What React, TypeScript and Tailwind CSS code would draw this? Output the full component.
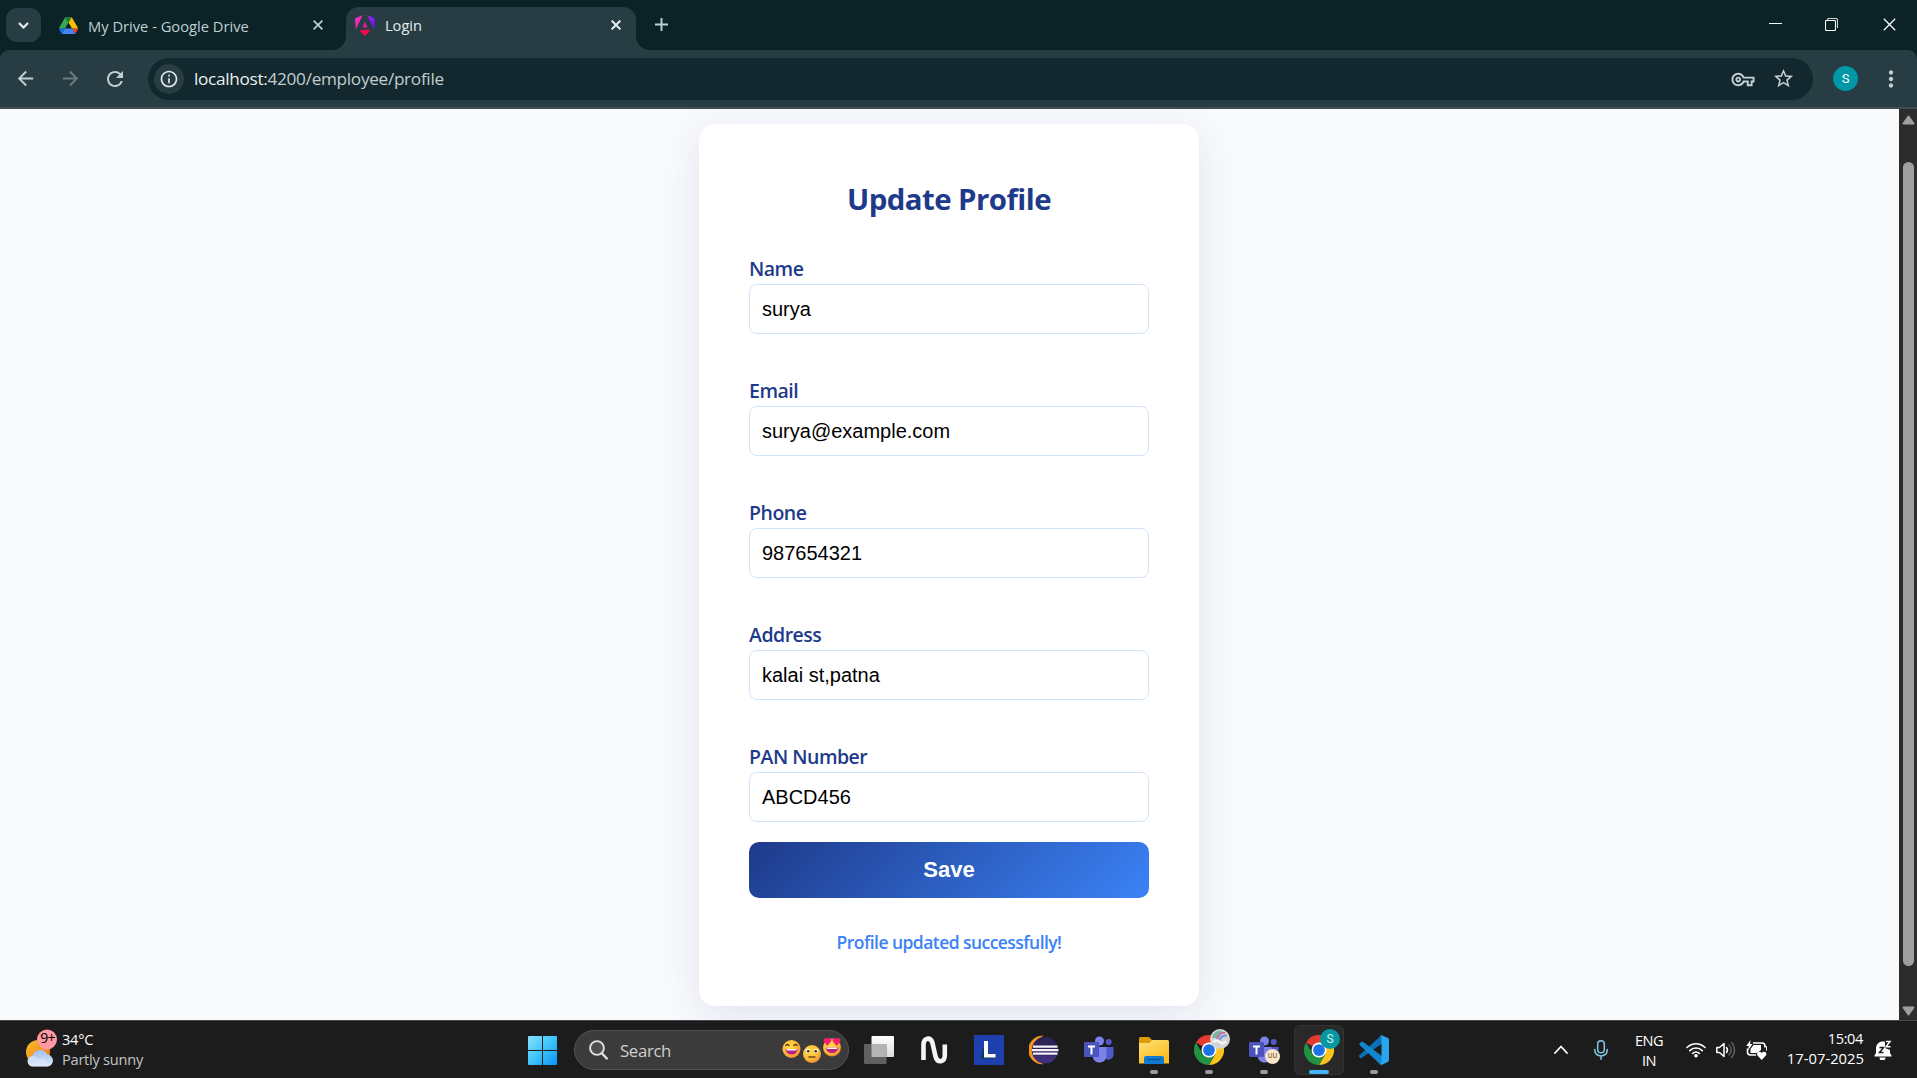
import React from "react";
import {
  MdArrowBack,
  MdArrowForward,
  MdMoreVert,
  MdOutlineInfo,
  MdOutlineVpnKey,
  MdRefresh,
  MdStarBorder,
} from "react-icons/md";

function DriveIcon() {
  return (
    <svg className="h-[17px] w-[19px]" viewBox="0 0 87.3 78">
      <path d="m6.6 66.85 3.85 6.65c.8 1.4 1.95 2.5 3.3 3.3l13.75-23.8h-27.5c0 1.55.4 3.1 1.2 4.5z" fill="#1d6ee8" />
      <path d="m43.65 25-13.75-23.8c-1.35.8-2.5 1.9-3.3 3.3l-25.4 44a9.06 9.06 0 0 0 -1.2 4.5h27.5z" fill="#34a853" />
      <path d="m73.55 76.8c1.35-.8 2.5-1.9 3.3-3.3l1.6-2.75 7.65-13.25c.8-1.4 1.2-2.95 1.2-4.5h-27.5l5.85 11.5z" fill="#ea4335" />
      <path d="m43.65 25 13.75-23.8c-1.35-.8-2.9-1.2-4.5-1.2h-18.5c-1.6 0-3.15.45-4.5 1.2z" fill="#188038" />
      <path d="m59.8 53h-32.3l-13.75 23.8c1.35.8 2.9 1.2 4.5 1.2h50.8c1.6 0 3.15-.45 4.5-1.2z" fill="#4285f4" />
      <path d="m73.4 26.5-12.7-22c-.8-1.4-1.95-2.5-3.3-3.3l-13.75 23.8 16.15 28h27.45c0-1.55-.4-3.1-1.2-4.5z" fill="#fbbc04" />
    </svg>
  );
}

function AngularIcon() {
  return (
    <svg className="h-[21px] w-[20px]" viewBox="0 0 223 236">
      <defs>
        <linearGradient id="ngA" x1="0" y1="0" x2="0.9" y2="1">
          <stop offset="0" stopColor="#f637e3" />
          <stop offset="1" stopColor="#f0108a" />
        </linearGradient>
        <linearGradient id="ngB" x1="0" y1="0" x2="1" y2="0.6">
          <stop offset="0" stopColor="#b026f0" />
          <stop offset="1" stopColor="#6d10f5" />
        </linearGradient>
      </defs>
      <path d="m222.077 39.192-8.019 125.923L137.387 0l84.69 39.192Z" fill="url(#ngB)" />
      <path d="m165.4 186.6-53.9 48.4-53.9-48.4 10.9-20.6h86.1l10.8 20.6Z" fill="#f5064f" />
      <path d="M83.2 141 111.2 73l28.1 68H83.2Z" fill="#e5179f" />
      <path d="M8.081 165.115 0 39.192 84.69 0 8.081 165.115Z" fill="url(#ngA)" />
    </svg>
  );
}

function CrossIcon({ className }: { className: string }) {
  return (
    <svg className={className} viewBox="0 0 10 10" fill="none" stroke="currentColor">
      <path d="M0.6 0.6 9.4 9.4M9.4 0.6 0.6 9.4" />
    </svg>
  );
}

function TabStrip() {
  return (
    <div className="flex h-[50px] shrink-0 bg-[#0b2227]">
      <button className="mt-2 ml-1.5 flex h-[34px] w-[35px] items-center justify-center rounded-[11px] bg-[#283d43]">
        <svg className="h-[7px] w-[11px]" viewBox="0 0 11 7" fill="none" stroke="#e6edee" strokeWidth="2.2">
          <path d="M1 1 5.5 5.5 10 1" />
        </svg>
      </button>
      <div className="ml-[18px] flex w-[287px] items-center text-[#bfcfd2]">
        <DriveIcon />
        <span className="ml-[10px] flex-1 pt-0.5 text-[14.7px]">My Drive - Google Drive</span>
        <CrossIcon className="mr-[23px] h-[10px] w-[10px] stroke-[1.7]" />
      </div>
      <div className="relative mt-[7px] flex h-[43px] w-[290px] items-center rounded-t-[13px] bg-[#283d43] pb-[7px] text-[#e4ebec]">
        <svg className="absolute bottom-0 -left-[14px] h-[14px] w-[14px]" viewBox="0 0 14 14">
          <path d="M14 0v14H0A14 14 0 0 0 14 0Z" fill="#283d43" />
        </svg>
        <svg className="absolute -right-[14px] bottom-0 h-[14px] w-[14px]" viewBox="0 0 14 14">
          <path d="M0 0v14h14A14 14 0 0 1 0 0Z" fill="#283d43" />
        </svg>
        <div className="ml-[9px]">
          <AngularIcon />
        </div>
        <span className="ml-[10px] flex-1 pt-0.5 text-[14.6px]">Login</span>
        <CrossIcon className="mr-[15px] h-[10px] w-[10px] stroke-2" />
      </div>
      <svg className="mt-[18px] ml-[19px] h-[13px] w-[13px]" viewBox="0 0 13 13" stroke="#bfcfd2" strokeWidth="1.9">
        <path d="M6.5 0v13M0 6.5h13" />
      </svg>
      <div className="mt-[18px] ml-auto flex h-[13px] items-center text-white">
        <svg className="h-[13px] w-[13px]" viewBox="0 0 13 13">
          <path d="M0 5h13v1H0z" fill="currentColor" />
        </svg>
        <svg className="ml-[43px] h-[13px] w-[13px]" viewBox="0 0 13 13" fill="none" stroke="currentColor" strokeWidth="1.1">
          <rect x="0.5" y="2.5" width="10" height="10" rx="1" />
          <path d="M2.5 2.5V1.5a1 1 0 0 1 1-1H10.5a2 2 0 0 1 2 2V10" strokeOpacity="0.8" />
        </svg>
        <CrossIcon className="mr-[21px] ml-[45px] h-[13px] w-[13px] stroke-[0.9]" />
      </div>
    </div>
  );
}

function Toolbar() {
  return (
    <div className="shrink-0 bg-[#0b2227]">
      <div className="flex h-[59px] items-center rounded-t-[9px] border-b-2 border-[#444c50] bg-[#283d43] text-[#bfcfd2]">
        <MdArrowBack className="ml-[14px] h-[23px] w-[23px]" />
        <MdArrowForward className="ml-[22px] h-[23px] w-[23px] text-[#6a7b80]" />
        <MdRefresh className="ml-[21px] h-[24px] w-[24px]" />
        <div className="ml-[21px] flex h-[42px] flex-1 items-center rounded-full bg-[#12282e]">
          <div className="ml-1.5 flex h-[30px] w-[30px] items-center justify-center rounded-full bg-[#283d43]">
            <MdOutlineInfo className="h-[20px] w-[20px] text-[#e4ebec]" />
          </div>
          <span className="ml-[10px] flex-1 pt-px text-[17.2px] tracking-[-0.3px] text-[#c3cccf]">
            <span className="text-[#e9eff0]">localhost:</span>4200/employee/profile
          </span>
          <MdOutlineVpnKey className="h-[24px] w-[24px] pt-px text-[#c6cfd1]" />
          <MdStarBorder className="mr-[18px] ml-[17px] h-[23px] w-[23px] text-[#c6cfd1]" />
        </div>
        <div className="ml-5 flex h-[25px] w-[25px] items-center justify-center rounded-full bg-[#0097a7] font-['Roboto'] text-[13px] text-white">
          S
        </div>
        <MdMoreVert className="mr-[13px] ml-[20px] h-[26px] w-[26px]" />
      </div>
    </div>
  );
}

const fields: [string, string][] = [
  ["Name", "surya"],
  ["Email", "surya@example.com"],
  ["Phone", "987654321"],
  ["Address", "kalai st,patna"],
  ["PAN Number", "ABCD456"],
];

function ProfileCard() {
  return (
    <div className="mt-[15px] h-[882px] w-[500px] rounded-2xl bg-white p-[50px] shadow-[0_10px_40px_rgba(30,58,138,0.11)]">
      <h2 className="text-center text-[29.4px] leading-[50px] font-bold tracking-[-0.55px] text-[#1e3a8a]">
        Update Profile
      </h2>
      <form className="mt-7 flex flex-col">
        <div className="flex flex-col gap-10">
          {fields.map(([label, value]) => (
            <label key={label} className="flex flex-col">
              <span className="h-8 pt-px text-[19.5px] leading-8 font-semibold tracking-[-0.5px] text-[#1e3a8a]">{label}</span>
              <input
                className="h-[50px] rounded-lg border border-[#d0e2f8] bg-white px-3 font-['Liberation_Sans'] text-[20px] text-black outline-none"
                defaultValue={value}
              />
            </label>
          ))}
        </div>
        <button
          type="button"
          className="mt-5 h-14 rounded-[10px] bg-[linear-gradient(135deg,#1e3a8a,#3b82f6)] pb-0.5 font-['Liberation_Sans'] text-[22px] font-bold text-white"
        >
          Save
        </button>
      </form>
      <p className="mt-[30px] text-center text-[17.5px] leading-7 font-semibold tracking-[-0.55px] text-[#3b82f6]">
        Profile updated successfully!
      </p>
    </div>
  );
}

function Scrollbar() {
  return (
    <div className="flex w-[18px] shrink-0 flex-col items-center bg-[#2c2c2c] pl-px">
      <svg className="mt-[6px] h-[10px] w-[13px]" viewBox="0 0 13 10">
        <path d="M6.5 1.5 11.5 8.5H1.5Z" fill="#9f9f9f" stroke="#9f9f9f" strokeWidth="2" strokeLinejoin="round" />
      </svg>
      <div className="mt-[37px] h-[804px] w-[11px] rounded-full bg-[#9f9f9f]" />
      <svg className="mt-[40px] h-[10px] w-[13px]" viewBox="0 0 13 10">
        <path d="M6.5 8.5 11.5 1.5H1.5Z" fill="#9f9f9f" stroke="#9f9f9f" strokeWidth="2" strokeLinejoin="round" />
      </svg>
    </div>
  );
}

function WeatherIcon() {
  return (
    <svg className="h-[38px] w-[32px] overflow-visible" viewBox="0 0 32 38">
      <defs>
        <linearGradient id="sun" x1="0" y1="0" x2="1" y2="1">
          <stop offset="0" stopColor="#f6c02c" />
          <stop offset="1" stopColor="#f2710f" />
        </linearGradient>
        <linearGradient id="cloud" x1="0" y1="0" x2="0.2" y2="1">
          <stop offset="0" stopColor="#9cbcf2" />
          <stop offset="1" stopColor="#d5e4fb" />
        </linearGradient>
      </defs>
      <circle cx="12" cy="21" r="12" fill="url(#sun)" />
      <path d="M7 35.500a5.200 5.200 0 0 1-.6-10.400 8 8 0 0 1 15-1.500 6 6 0 0 1 .6 11.900Z" fill="url(#cloud)" />
      <path d="M7 35.500a5.200 5.200 0 0 1 0-10.400c3 0 5 2 5.600 4 2-2 5-2 7 0 2 2 3 4 2.400 6.400Z" fill="#e4eefd" fillOpacity="0.45" />
      <circle cx="21" cy="8.500" r="10" fill="#ff99a4" />
    </svg>
  );
}

function WindowsIcon() {
  return (
    <svg className="mt-px h-[29px] w-[29px]" viewBox="0 0 29 29">
      <defs>
        <linearGradient id="win" x1="0" y1="0" x2="29" y2="29" gradientUnits="userSpaceOnUse">
          <stop offset="0" stopColor="#86e2ff" />
          <stop offset="0.5" stopColor="#3fc3fb" />
          <stop offset="1" stopColor="#0a93f5" />
        </linearGradient>
      </defs>
      <path d="M0 1a1 1 0 0 1 1-1h13v14H0ZM15 0h13a1 1 0 0 1 1 1v13H15ZM0 15h14v14H1a1 1 0 0 1-1-1ZM15 15h14v13a1 1 0 0 1-1 1H15Z" fill="url(#win)" />
    </svg>
  );
}

function SearchEmoji() {
  return (
    <svg className="h-[26px] w-[60px]" viewBox="0 0 60 26">
      <defs>
        <radialGradient id="face" cx="0.4" cy="0.35" r="0.7">
          <stop offset="0" stopColor="#ffdc4a" />
          <stop offset="0.6" stopColor="#fdbb36" />
          <stop offset="1" stopColor="#f08a35" />
        </radialGradient>
      </defs>
      <circle cx="9.500" cy="12" r="9" fill="url(#face)" />
      <path d="M3.500 12h12a6 5.500 0 0 1-12 0Z" fill="#bb1d80" />
      <path d="M4.500 12h10v1.500h-10Z" fill="#fff" />
      <path d="M3.500 9q2-3 4 0M11.500 9q2-3 4 0" fill="none" stroke="#5a2d1a" strokeWidth="1.300" />
      <circle cx="30" cy="17" r="9" fill="url(#face)" />
      <circle cx="26" cy="14" r="2.200" fill="#fff" />
      <circle cx="34" cy="14" r="2.200" fill="#fff" />
      <circle cx="26.200" cy="14.200" r="1.300" fill="#3a2318" />
      <circle cx="33.800" cy="14.200" r="1.300" fill="#3a2318" />
      <path d="M26.500 20h7" stroke="#5a2d1a" strokeWidth="1.300" />
      <circle cx="50" cy="10.500" r="9" fill="url(#face)" />
      <path d="M44 10.500h12a6 5.500 0 0 1-12 0Z" fill="#bb1d80" />
      <path d="M45 10.500h10v1.500H45Z" fill="#fff" />
      <path d="M45.500 9 41.800 4.500C40.500 2 43.500 -0.200 45.300 2 47 -0.400 50 1 49.300 4Z" fill="#f4216f" />
      <path d="M54.500 9 50.700 4C50 1 53 -0.400 54.700 2 56.500 -0.200 59.500 2 58.200 4.500Z" fill="#f4216f" />
    </svg>
  );
}

function TaskViewIcon() {
  return (
    <svg className="h-[28px] w-[30px]" viewBox="0 0 30 28">
      <defs>
        <linearGradient id="tv" x1="0" y1="0" x2="0" y2="1">
          <stop offset="0" stopColor="#fff" />
          <stop offset="1" stopColor="#dcdcdc" />
        </linearGradient>
      </defs>
      <rect x="7.500" width="22.500" height="21" rx="1" fill="url(#tv)" />
      <rect y="8" width="22.500" height="20" rx="1" fill="#606060" />
      <path d="M7.500 8h15v13h-15Z" fill="#b4b4b4" />
    </svg>
  );
}

function WaveIcon() {
  return (
    <svg className="h-[28px] w-[28px]" viewBox="0 0 28 28" fill="none" stroke="#f5f5f5" strokeWidth="4.600">
      <path d="M3.500 24V9C3.500 1.500 10.500.500 12.500 7L15.500 20.500C17.500 27.500 24.800 26.500 24.800 19V8.500" />
    </svg>
  );
}

function EclipseIcon() {
  return (
    <svg className="h-[30px] w-[30px]" viewBox="0 0 30 30">
      <path d="M13.500 1A14 14 0 0 0 13.500 29 16 16 0 0 1 13.500 1Z" fill="#f7941e" stroke="#f7941e" strokeWidth="0.800" />
      <circle cx="16" cy="15" r="13.200" fill="#2c2255" />
      <path d="M4 20.500a13 13 0 0 0 24 0Z" fill="#3f3079" />
      <path d="M4 10.500h24.500v2.200H4ZM3 14h26.500v2.200H3ZM4 17.500h24.500v2.200H4Z" fill="#f3f0fa" />
    </svg>
  );
}

function TeamsIcon() {
  return (
    <svg className="h-[28px] w-[30px]" viewBox="0 0 30 28">
      <circle cx="24.700" cy="6" r="3" fill="#5059c9" />
      <path d="M20 11h9.500v8a5.500 5.500 0 0 1-9.500 3Z" fill="#5059c9" />
      <circle cx="15.500" cy="5" r="4.500" fill="#7b83eb" />
      <path d="M9 11h13.500v9a7 7 0 0 1-13.500 2Z" fill="#7b83eb" />
      <rect y="6" width="15" height="15" rx="1.300" fill="#4b53bc" />
      <path d="M4 9.500h7v1.900H8.500v7h-2v-7H4Z" fill="#fff" />
    </svg>
  );
}

function FolderIcon() {
  return (
    <svg className="mt-px h-[27px] w-[30px]" viewBox="0 0 30 27">
      <defs>
        <linearGradient id="folder" x1="0" y1="0" x2="0.6" y2="1">
          <stop offset="0" stopColor="#ffe07a" />
          <stop offset="1" stopColor="#fbbc1b" />
        </linearGradient>
      </defs>
      <path d="M0 1.500A1.500 1.500 0 0 1 1.500 0H10l3 3v5H0Z" fill="#dd9b06" />
      <path d="M0 6h10.500l2.500-3h15.500A1.500 1.500 0 0 1 30 4.500V26.500H0Z" fill="url(#folder)" />
      <path d="M5 27v-6a2 2 0 0 1 2-2h16a2 2 0 0 1 2 2v6Z" fill="#0f7bd1" />
      <path d="M8.500 22.500h13" stroke="#0a4f94" strokeWidth="1.300" />
    </svg>
  );
}

function ChromeIcon() {
  return (
    <svg className="h-[30px] w-[30px]" viewBox="0 0 48 48">
      <path d="M24 24 3.200 12A24 24 0 0 1 44.800 12Z" fill="#e33b2e" />
      <path d="M24 12H44.800A24 24 0 0 1 24 48L34.400 30Z" fill="#fcc31e" />
      <path d="M13.600 30 3.200 12A24 24 0 0 0 24 48L34.400 30Z" fill="#229342" />
      <circle cx="24" cy="24" r="12" fill="#fff" />
      <circle cx="24" cy="24" r="9.400" fill="#1a73e8" />
    </svg>
  );
}

function CodeIcon() {
  return (
    <svg className="h-[30px] w-[30px]" viewBox="0 0 100 100">
      <path d="M3 66 72 3 97 14 10 76a5 5 0 0 1-7 0L1 73a5 5 0 0 1 2-7Z" fill="#0a70b8" />
      <path d="M3 34a5 5 0 0 1 0-7L8 23a5 5 0 0 1 6 0L97 86 72 99Z" fill="#1286d0" />
      <path d="M73 99a6 6 0 0 1-3-3L75 93V7L70 3.500A6 6 0 0 1 76 .500L96 10a6 6 0 0 1 4 5.500V84.500a6 6 0 0 1-4 5.500L77 99a6 6 0 0 1-4 0Z" fill="#2ba5ee" />
    </svg>
  );
}

function TaskCell({ state, children }: { state?: "open" | "active"; children: React.ReactNode }) {
  const tone = state === "active" ? "border-[#343434] bg-[#292929]" : "border-transparent";
  return (
    <div className={`relative flex h-[50px] w-[50px] items-center justify-center rounded-md border ${tone}`}>
      {children}
      {state === "open" && <span className="absolute bottom-0 left-[20px] h-1 w-2 rounded-full bg-[#9a9a9a]" />}
      {state === "active" && <span className="absolute bottom-0 left-[14px] h-1 w-5 rounded-full bg-[#42b5fa]" />}
    </div>
  );
}

function Tray() {
  return (
    <div className="ml-auto flex h-full items-center text-[14.6px] leading-5 text-white">
      <svg className="h-[9px] w-[14px]" viewBox="0 0 14 9" fill="none" stroke="currentColor" strokeWidth="1.800" strokeLinecap="round" strokeLinejoin="round">
        <path d="M1 8 7 1.500 13 8" />
      </svg>
      <svg className="ml-[26px] h-[20px] w-[14px]" viewBox="0 0 14 20" fill="none" stroke="#7fcbe4" strokeWidth="1.500" strokeLinecap="round">
        <rect x="3.700" y="0.800" width="6.600" height="12" rx="3.300" />
        <path d="M.800 9.500v1a6.200 5.500 0 0 0 12.400 0v-1M7 16v3.200" />
      </svg>
      <div className="ml-[25px] w-8 text-center tracking-[-0.6px]">
        <div>ENG</div>
        <div>IN</div>
      </div>
      <svg className="ml-[21px] h-[16px] w-[20px]" viewBox="0 0 20 16" fill="none" stroke="currentColor" strokeWidth="1.600" strokeLinecap="round">
        <path d="M1 5.500a12.700 12.700 0 0 1 18 0M3.800 8.600a8.800 8.800 0 0 1 12.400 0M6.600 11.500a4.900 4.900 0 0 1 6.800 0" />
        <circle cx="10" cy="13.800" r="1.200" fill="currentColor" stroke="none" />
        <circle cx="10" cy="13.800" r="1" />
      </svg>
      <svg className="ml-[10px] h-[18px] w-[20px]" viewBox="0 0 20 18" fill="none" stroke="currentColor" strokeWidth="1.500" strokeLinecap="round" strokeLinejoin="round">
        <path d="M.800 6.500h2.700L8 2.500v13L3.500 11.500H.800ZM10.500 6.500a4 4 0 0 1 0 5" />
        <path d="M13 4a7 7 0 0 1 0 10M15.500 1.500a11 11 0 0 1 0 15" stroke="#5c5c5c" />
      </svg>
      <svg className="ml-[10px] h-[20px] w-[21px]" viewBox="0 0 21 20">
        <path d="M7 3h9a3 3 0 0 1 3 3v1.500M1.500 8.500V12a3 3 0 0 0 3 3H10" fill="none" stroke="#fff" strokeWidth="1.600" />
        <path d="M7.500 5h7.500v5l-4 3H4.500V9Z" fill="#fff" />
        <path d="M4.500 0 .200 6h2.500L2 10.500 6.500 4H4Z" fill="#fff" />
        <path d="M19 6.500h1.500v4" stroke="#fff" fill="none" />
        <path d="M15.700 20 11.500 15.500c-1.800-3 2-5 4.200-2.500 2.200-2.500 6-.500 4.200 2.500Z" fill="#fff" />
      </svg>
      <div className="ml-[16px] w-[80px] pb-[3px] text-right">
        <div className="tracking-[-0.4px]">15:04</div>
        <div className="-mr-px text-[14.8px]">17-07-2025</div>
      </div>
      <svg className="mr-[25px] ml-[11px] h-[20px] w-[18px]" viewBox="0 0 18 20">
        <path d="M2 13V7.500A6.500 6.500 0 0 1 8 1.500H11V8l5 2v3l1.500 2.500V16.500H.500V15.500Z" fill="#fff" />
        <path d="M5.500 17.500h6a3 3 0 0 1-6 0Z" fill="#fff" />
        <path d="M5.500 7.500h4l-4 5h4" fill="none" stroke="#1c1c1c" strokeWidth="1.500" />
        <path d="M12 1.500h4L12 6.800h4.500" fill="none" stroke="#fff" strokeWidth="1.500" />
      </svg>
    </div>
  );
}

function Taskbar() {
  return (
    <div className="flex h-[58px] shrink-0 items-center border-t border-[#45494b] bg-[#1c1c1c]">
      <div className="relative ml-[26px] flex w-[502px] items-center text-white">
        <WeatherIcon />
        <span className="absolute -top-px left-[12px] w-[19px] text-center text-[14px] leading-[19px] tracking-[-0.7px] text-black">
          9+
        </span>
        <div className="ml-[4px] pb-0.5 text-[14.6px] leading-5">
          <div className="tracking-[-0.25px]">34°C</div>
          <div className="tracking-[-0.25px] text-[#c4c4c4]">Partly sunny</div>
        </div>
      </div>
      <WindowsIcon />
      <div className="ml-[17px] flex h-10 w-[275px] items-center rounded-full border border-[#525252] bg-[#3b3b3b]">
        <svg className="ml-[14px] h-[20px] w-[19px]" viewBox="0 0 19 20" fill="none" stroke="#e2e2e2">
          <circle cx="8" cy="8" r="6.900" strokeWidth="1.900" fill="#4d4f50" />
          <path d="m12.800 13.200 5 5.300" strokeWidth="2.400" strokeLinecap="round" />
        </svg>
        <span className="ml-[12px] flex-1 pt-0.5 text-[16.8px] tracking-[-0.35px] text-[#cfcfcf]">Search</span>
        <div className="mr-[6px]">
          <SearchEmoji />
        </div>
      </div>
      <div className="ml-[5px] flex gap-[5px]">
        <TaskCell>
          <TaskViewIcon />
        </TaskCell>
        <TaskCell>
          <WaveIcon />
        </TaskCell>
        <TaskCell>
          <div className="flex h-[30px] w-[30px] items-center justify-center bg-[#1e40af]">
            <svg className="h-[20px] w-[16px]" viewBox="0 0 16 20">
              <path d="M3 6 0 18.500h12V17H5Z" fill="#063b4b" />
              <path d="M3 1h4v13h7.500v3.500H3Z" fill="#fff" />
            </svg>
          </div>
        </TaskCell>
        <TaskCell>
          <EclipseIcon />
        </TaskCell>
        <TaskCell>
          <TeamsIcon />
        </TaskCell>
        <TaskCell state="open">
          <FolderIcon />
        </TaskCell>
        <TaskCell state="open">
          <ChromeIcon />
          <svg className="absolute top-[3px] right-[3px] h-[20px] w-[20px]" viewBox="0 0 20 20">
            <circle cx="10" cy="10" r="10" fill="#d3d5d3" />
            <path d="M2 9C3 3 8 1 12 2L9 9Z" fill="#74b89b" />
            <path d="M7 11C8 5 12 3 15 4" fill="none" stroke="#c46fa6" strokeWidth="2" />
            <path d="M9.500 12C10.500 8 13 6 17 6.500" fill="none" stroke="#6c93d8" strokeWidth="2" />
            <path d="M3 13q4-3 7 0t6-1" fill="none" stroke="#f3f3f3" strokeWidth="2.500" />
          </svg>
        </TaskCell>
        <TaskCell state="open">
          <TeamsIcon />
          <span className="absolute right-[8px] bottom-[10px] flex h-[15px] w-[15px] items-center justify-center rounded-full bg-[#f7e6c8] text-[6.5px] font-semibold text-[#7c5a35]">
            UU
          </span>
        </TaskCell>
        <TaskCell state="active">
          <ChromeIcon />
          <span className="absolute top-[3px] right-[3px] flex h-[20px] w-[20px] items-center justify-center rounded-full bg-[#0797a2] font-['Roboto'] text-[12px] text-[#d7f3f5]">
            S
          </span>
        </TaskCell>
        <TaskCell state="open">
          <CodeIcon />
        </TaskCell>
      </div>
      <Tray />
    </div>
  );
}

export default function App() {
  return (
    <div className="flex h-screen w-screen flex-col overflow-hidden font-['Open_Sans','Noto_Sans',sans-serif]">
      <TabStrip />
      <Toolbar />
      <div className="flex min-h-0 flex-1 overflow-hidden">
        <main className="flex flex-1 items-start justify-center overflow-hidden bg-[#f9fafc] pr-px">
          <ProfileCard />
        </main>
        <Scrollbar />
      </div>
      <Taskbar />
    </div>
  );
}
